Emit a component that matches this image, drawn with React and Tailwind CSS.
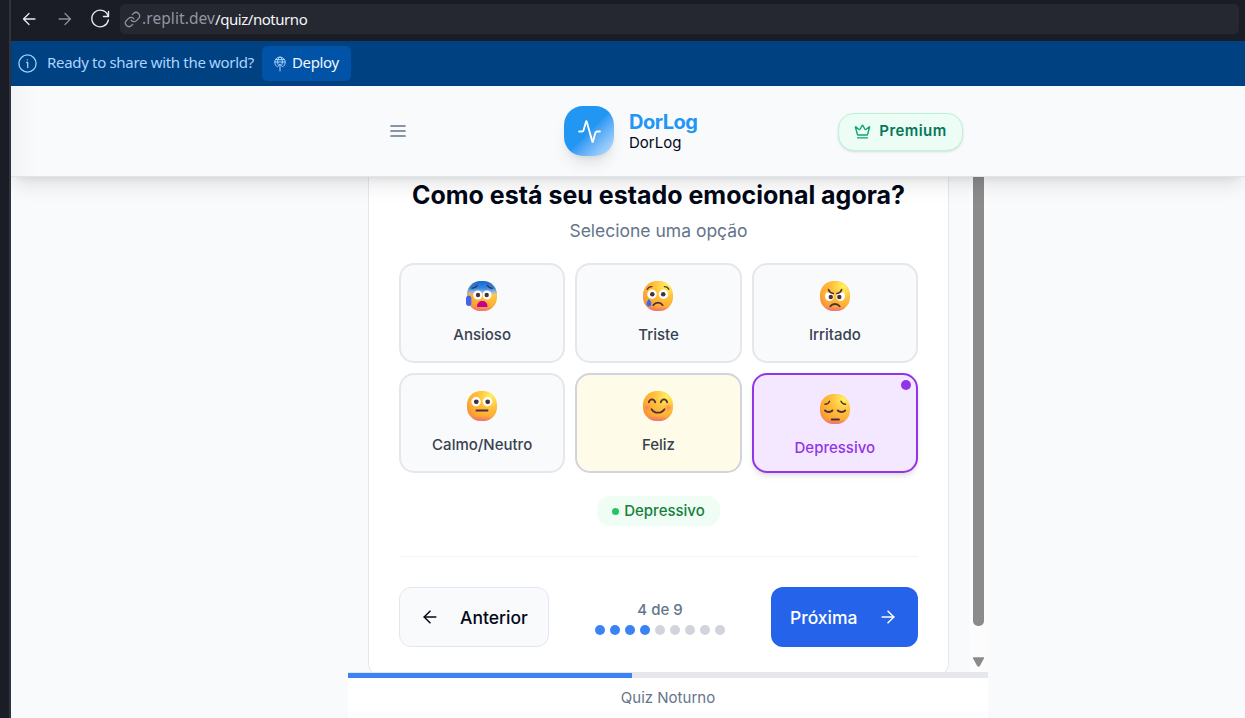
import React from "react";
import { ArrowLeft, ArrowRight, Crown } from "lucide-react";

const INK = "#4b2f3b";

function Face({ kind }) {
  const id = "face-" + kind;
  return (
    <svg width="32" height="32" viewBox="0 0 32 32" fill="none">
      <defs>
        <radialGradient id={id} cx="0.78" cy="0.18" r="0.98">
          <stop offset="0" stopColor="#fff15e" />
          <stop offset="0.42" stopColor="#ffbf3c" />
          <stop offset="0.78" stopColor="#fda831" />
          <stop offset="1" stopColor="#f0864a" />
        </radialGradient>
        <linearGradient id={id + "-pink"} x1="0" y1="0" x2="0" y2="1">
          <stop offset="0.84" stopColor="#f05a8c" stopOpacity="0" />
          <stop offset="1" stopColor="#ee5f9c" stopOpacity="0.75" />
        </linearGradient>
        <linearGradient id={id + "-blue"} x1="0" y1="0" x2="0" y2="1">
          <stop offset="0" stopColor="#1a66cc" />
          <stop offset="0.24" stopColor="#2f86f0" />
          <stop offset="0.36" stopColor="#7fb0e8" stopOpacity="0.85" />
          <stop offset="0.5" stopColor="#c8c8c8" stopOpacity="0" />
        </linearGradient>
        <radialGradient id={id + "-cheek"}>
          <stop offset="0" stopColor="#ff6b6b" stopOpacity="0.65" />
          <stop offset="1" stopColor="#ff6b6b" stopOpacity="0" />
        </radialGradient>
      </defs>
      <rect x="1" y="1" width="30" height="30" rx="13.8" fill={`url(#${id})`} />
      <rect x="1" y="1" width="30" height="30" rx="13.8" fill={`url(#${id}-pink)`} />
      {kind === "anxious" && (
        <g>
          <rect x="1" y="1" width="30" height="30" rx="13.8" fill={`url(#${id}-blue)`} />
          <g stroke={INK} strokeWidth="1.500" strokeLinecap="round">
            <path d="M6 8.200c2.200 0 3.800-.9 5-2.500M21.500 5.500c1 1.800 2.800 2.700 4.700 2.700" />
          </g>
          <circle cx="11.700" cy="15" r="4.500" fill="#fff" />
          <circle cx="21" cy="15" r="4.500" fill="#fff" />
          <circle cx="12" cy="15" r="2.200" fill={INK} />
          <circle cx="20.700" cy="15" r="2.200" fill={INK} />
          <path d="M11 26.500c0-3.500 2.200-5.500 5.300-5.500s5.200 2 5.200 5.500c0 .4-.2.600-.5.600h-9.500c-.3 0-.5-.2-.5-.6z" fill="#c50090" />
          <path d="M0 18.500c0-1.500 1-2.700 2.400-2.700 1.500 0 2.900.6 2.900 2.400v5.300c0 1.500-1 2.500-2.500 2.500S0 25 0 23.500z" fill="#4063f0" />
        </g>
      )}
      {kind === "sad" && (
        <g>
          <circle cx="10" cy="14.300" r="4.700" fill="#fff" />
          <circle cx="21.500" cy="14.300" r="4.700" fill="#fff" />
          <circle cx="10.300" cy="14.300" r="2.300" fill={INK} />
          <circle cx="21.200" cy="14.300" r="2.300" fill={INK} />
          <path d="M5.300 9.300c.8-1.800 2.500-2.700 4.600-2.700M22.300 6.600c2.100 0 3.700.9 4.500 2.700" stroke={INK} strokeWidth="1.300" strokeLinecap="round" />
          <path d="M11.300 25.200c1.300-1.800 2.900-2.600 4.700-2.600s3.400.8 4.700 2.600" stroke={INK} strokeWidth="1.700" strokeLinecap="round" />
          <path d="M7 19c1.500 1.700 2.400 3.200 2.400 4.700 0 1.500-1 2.700-2.400 2.700s-2.400-1.200-2.400-2.700c0-1.500.9-3 2.400-4.700z" fill="#346bf0" />
        </g>
      )}
      {kind === "angry" && (
        <g>
          <path d="M7.500 12.200l6.500 1.800c2 5-1 7-3.500 7S6 19 6 16.500c0-1.800.5-3.200 1.500-4.300zM25 12.200L18 14c-2 5 1 7 3.500 7s4.500-2 4.500-4.500c0-1.800-.2-3.200-1-4.300z" fill="#fff" />
          <circle cx="11.800" cy="17" r="2.200" fill={INK} />
          <circle cx="20.300" cy="17" r="2.200" fill={INK} />
          <path d="M9.500 9.500c.7 2.300 2.200 3.500 4.800 4M22.700 9.500c-.7 2.300-2.200 3.500-4.800 4" stroke={INK} strokeWidth="1.500" strokeLinecap="round" />
          <path d="M11.300 26.300c1.200-1.600 2.900-2.300 4.700-2.300s3.500.7 4.700 2.300" stroke={INK} strokeWidth="1.800" strokeLinecap="round" />
        </g>
      )}
      {kind === "neutral" && (
        <g>
          <circle cx="10" cy="11.800" r="4.700" fill="#fff" />
          <circle cx="21.500" cy="11.800" r="4.700" fill="#fff" />
          <circle cx="10.300" cy="11.800" r="2.400" fill={INK} />
          <circle cx="21.700" cy="11.800" r="2.400" fill={INK} />
          <path d="M10.500 20.500h11" stroke={INK} strokeWidth="2" strokeLinecap="round" />
        </g>
      )}
      {kind === "happy" && (
        <g>
          <circle cx="5.500" cy="17.500" r="4" fill={`url(#${id}-cheek)`} />
          <circle cx="26.300" cy="17.500" r="4" fill={`url(#${id}-cheek)`} />
          <path d="M6.800 12.300c.6-2 1.700-2.900 3.200-2.900s2.600.9 3.200 2.900M18.800 12.300c.6-2 1.700-2.900 3.200-2.900s2.600.9 3.200 2.900M9.500 19.200c1.700 2.400 3.900 3.500 6.500 3.500s4.800-1.100 6.500-3.500" stroke={INK} strokeWidth="1.800" strokeLinecap="round" />
        </g>
      )}
      {kind === "pensive" && (
        <g stroke={INK} strokeLinecap="round">
          <path d="M6 11.300c2.200-.1 3.700-1.100 4.600-3.100M22 8.200c.9 2 2.400 3 4.600 3.100" strokeWidth="1.400" />
          <path d="M6 17.500c1.100 1.100 2.300 1.500 3.700 1.500s2.700-.4 3.700-1.500M18.800 17.500c1.100 1.100 2.300 1.500 3.700 1.500s2.700-.4 3.700-1.500" strokeWidth="1.900" />
          <path d="M12.700 26.500h7.200" strokeWidth="2" />
        </g>
      )}
    </svg>
  );
}

const options = [
  { label: "Ansioso", kind: "anxious" },
  { label: "Triste", kind: "sad" },
  { label: "Irritado", kind: "angry" },
  { label: "Calmo/Neutro", kind: "neutral" },
  { label: "Feliz", kind: "happy", hover: true },
  { label: "Depressivo", kind: "pensive", selected: true },
];

function Option({ label, kind, hover, selected }) {
  const tone = selected
    ? "border-[#9333ea] bg-[#f3e8ff] text-[#9333ea] shadow-md pt-[18px]"
    : hover
    ? "border-[#d1d5db] bg-[#fefce8] text-[#374151] pt-[15px]"
    : "border-[#e5e7eb] bg-[#f9fafc] text-[#374151] pt-[15px]";
  return (
    <button className={`relative flex h-[100px] flex-col items-center rounded-[15px] border-2 ${tone}`}>
      <Face kind={kind} />
      <span className="mt-[13px] text-[15px] font-medium leading-[20px]">{label}</span>
      {selected && <span className="absolute right-[5px] top-[5px] size-[10px] rounded-full bg-[#9333ea]" />}
    </button>
  );
}

function BrowserBar() {
  return (
    <div className="flex h-[41px] shrink-0 items-center bg-[#1b1d26] pb-[3px] pl-[9px] font-['Noto_Sans',sans-serif]">
      <svg width="18" height="18" viewBox="0 0 18 18" fill="none" stroke="#e8e9ee" strokeWidth="1.300" strokeLinecap="round" strokeLinejoin="round">
        <path d="M15 9H3.500M9 3.500L3.500 9l5.500 5.500" />
      </svg>
      <svg className="ml-[18px]" width="18" height="18" viewBox="0 0 18 18" fill="none" stroke="#8b8e9a" strokeWidth="1.300" strokeLinecap="round" strokeLinejoin="round">
        <path d="M3 9h11.500M9 3.500L14.500 9 9 14.500" />
      </svg>
      <svg className="ml-[16px]" width="20" height="20" viewBox="0 0 20 20" fill="none" stroke="#e8e9ee" strokeWidth="1.400" strokeLinecap="round" strokeLinejoin="round">
        <path d="M18.500 2.500v5h-5M18.200 7.500A8.300 8.300 0 1 0 18.300 11" />
      </svg>
      <div className="ml-[10px] mr-[6px] flex h-[30px] flex-1 items-center rounded-[5px] bg-[#252830] pl-[4px] text-[15px]">
        <svg width="17" height="17" viewBox="0 0 24 24" fill="none" stroke="#9395a1" strokeWidth="1.700" strokeLinecap="round">
          <path d="M10 13a5 5 0 0 0 7.540.54l3-3a5 5 0 0 0-7.070-7.070l-1.720 1.710M14 11a5 5 0 0 0-7.540-.54l-3 3a5 5 0 0 0 7.070 7.070l1.710-1.710" />
        </svg>
        <span className="ml-[1px] w-[73px] text-[15.500px] tracking-[0.08px] text-[#9395a1]">.replit.dev</span>
        <span className="tracking-[-0.45px] text-[#f5f6fa]">/quiz/noturno</span>
      </div>
    </div>
  );
}

function DeployBanner() {
  return (
    <div className="flex h-[45px] shrink-0 items-center bg-[#004182] pl-[7px] font-['Noto_Sans',sans-serif] text-[15px]">
      <svg width="19" height="19" viewBox="0 0 19 19" fill="none" stroke="#9fd0ff" strokeWidth="1.300" strokeLinecap="round" strokeLinejoin="round">
        <circle cx="9.500" cy="9.500" r="8.600" />
        <path d="M8.700 8.500h1v5M9.400 5.800v.1" />
      </svg>
      <span className="ml-[10px] w-[215px] whitespace-nowrap pb-[2px] tracking-[-0.32px] text-[#a8d5ff]">Ready to share with the world?</span>
      <button className="flex h-[35px] w-[89px] items-center rounded-[5px] bg-[#0053a6] pl-[12px] text-[#f0f6ff]">
        <svg width="12" height="16" viewBox="0 0 12 16" fill="none" stroke="#a8d5ff" strokeWidth="1" strokeLinecap="round" strokeLinejoin="round">
          <path d="M2.300 10.200A5.300 5.300 0 1 1 9.700 10.200M.8 6h10.400M4 8.500C3 5.500 3.800 2 6 .8c2.200 1.200 3 4.700 2 7.700M1.500 3.600h9M6 8.300V15M3.500 10.800L6 8.300l2.500 2.500" />
        </svg>
        <span className="ml-[6px] pb-[2px] tracking-[-0.35px]">Deploy</span>
      </button>
    </div>
  );
}

function Header() {
  return (
    <header className="relative z-10 flex h-[91px] shrink-0 items-center border-b border-[#dfe5ee] bg-[#f9fafc] shadow-[0_12px_19px_-4px_rgba(0,0,0,0.1),0_5px_8px_-5px_rgba(0,0,0,0.1)]">
      <div className="h-full w-[26px] bg-linear-to-r from-[#f3f4f6] to-[#f9fafc]" />
      <svg className="ml-[351px]" width="20" height="20" viewBox="0 0 20 20" stroke="#64748b" strokeWidth="1.700" strokeLinecap="round">
        <path d="M3 5h14M3 10h14M3 15h14" />
      </svg>
      <div className="ml-[156px] flex size-[50px] items-center justify-center rounded-[19px] bg-linear-to-br from-[#2196f3] from-50% to-[#c4e2fc] shadow-lg">
        <svg width="25" height="25" viewBox="0 0 24 24" fill="none" stroke="#fff" strokeWidth="1.800" strokeLinecap="round" strokeLinejoin="round">
          <path d="M22 12h-2.480a2 2 0 0 0-1.930 1.460l-2.350 8.360a.25.25 0 0 1-.48 0L9.240 2.180a.25.25 0 0 0-.48 0l-2.350 8.360A2 2 0 0 1 4.490 12H2" />
        </svg>
      </div>
      <div className="ml-[15px] w-[209px] pt-[1px]">
        <div className="text-[20px] font-bold leading-[23px] tracking-[-0.500px] text-[#2196f3]">DorLog</div>
        <div className="text-[15px] leading-[18px] text-[#020817]">DorLog</div>
      </div>
      <div className="mt-[1px] flex h-[38px] w-[125px] items-center justify-center gap-[8px] rounded-[16px] border border-[#bbf4d8] bg-[#ecfdf5] text-[15px] font-semibold tracking-[0.45px] text-[#047857] shadow-sm">
        <Crown size={17} strokeWidth={1.9} className="text-[#10a36f]" />
        Premium
      </div>
    </header>
  );
}

export default function App() {
  return (
    <div className="flex h-[718px] w-[1245px] overflow-hidden bg-[#1b1d26] font-['Inter',sans-serif]">
      <div className="relative z-20 w-[11px] shrink-0 border-r-2 border-[#30323c] bg-[#1b1d26]" />
      <div className="flex min-w-0 flex-1 flex-col">
        <BrowserBar />
        <DeployBanner />
        <Header />
        <main className="flex min-h-0 flex-1 bg-[#f9fafc] pl-[337px]">
          <div className="flex w-[640px] flex-col">
            <div className="flex h-[495px] shrink-0 overflow-hidden">
              <section className="ml-[20px] flex h-[501px] w-[581px] shrink-0 flex-col rounded-b-[15px] border border-t-0 border-[#e2e8f0] bg-white px-[30px]">
                <h1 className="mt-[1px] whitespace-nowrap text-center text-[25px] font-bold leading-[35px] text-[#020817]">Como está seu estado emocional agora?</h1>
                <p className="mt-[5px] text-center text-[17.500px] leading-[26px] text-[#64748b]">Selecione uma opção</p>
                <div className="mt-[19px] grid grid-cols-3 gap-[10px]">
                  {options.map((o) => (
                    <Option key={o.label} {...o} />
                  ))}
                </div>
                <div className="mt-[23px] flex h-[30px] items-center gap-[5px] self-center rounded-[13px] bg-[#f0fdf4] px-[15px] text-[15px] font-medium text-[#15803d]">
                  <span className="size-[7px] rounded-full bg-[#22c55e]" />
                  Depressivo
                </div>
                <div className="mt-[30px] flex justify-between border-t border-[#f1f3f5] pt-[30px]">
                  <button className="flex h-[60px] w-[150px] items-center rounded-[12px] border border-[#e2e8f0] bg-[#f9fafc] pl-[20px] text-[17.500px] font-medium text-[#020817]">
                    <ArrowLeft size={20} strokeWidth={1.8} />
                    <span className="ml-[20px] pt-[2px]">Anterior</span>
                  </button>
                  <div className="flex flex-col items-center pt-[13px]">
                    <span className="text-[15px] font-medium leading-[20px] text-[#64748b]">4 de 9</span>
                    <div className="mt-[5px] flex gap-[5px]">
                      {[1, 2, 3, 4, 5, 6, 7, 8, 9].map((n) => (
                        <span key={n} className={n <= 4 ? "size-[10px] rounded-full bg-[#3b82f6]" : "size-[10px] rounded-full bg-[#d1d5db]"} />
                      ))}
                    </div>
                  </div>
                  <button className="flex h-[60px] w-[147px] items-center rounded-[12px] bg-[#2563eb] pl-[19px] text-[17.500px] font-medium text-white">
                    <span className="pt-[2px]">Próxima</span>
                    <ArrowRight className="ml-[20px]" size={20} strokeWidth={1.8} />
                  </button>
                </div>
              </section>
              <div className="ml-[20px] flex w-[19px] flex-col items-center bg-[#fcfcfc]">
                <div className="h-[449px] w-[11px] shrink-0 rounded-b-[5px] bg-[#8b8b8b]" />
                <svg className="mt-[31px]" width="13" height="11" viewBox="0 0 13 11">
                  <path d="M1.500 1h10l-4 7.300q-1 1.400-2 0z" fill="#8b8b8b" stroke="#8b8b8b" strokeWidth="1.300" strokeLinejoin="round" />
                </svg>
              </div>
            </div>
            <div className="h-[6px] shrink-0 bg-[#e5e7eb] pt-[1px]">
              <div className="h-full w-[284px] bg-[#3b82f6]" />
            </div>
            <footer className="flex-1 bg-white pt-[10px] text-center text-[15px] leading-[20px] text-[#64748b]">Quiz Noturno</footer>
          </div>
        </main>
      </div>
    </div>
  );
}
